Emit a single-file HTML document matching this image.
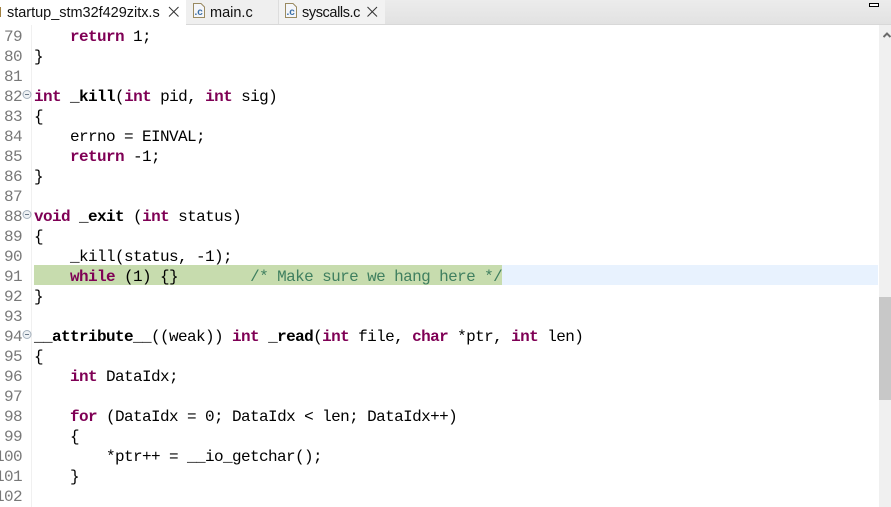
<!DOCTYPE html>
<html><head><meta charset="utf-8">
<style>
html,body{margin:0;padding:0;background:#fff}
#p{position:relative;width:891px;height:507px;overflow:hidden;background:#fff}
.a{position:absolute}
.tabt{position:absolute;top:3px;height:20px;font:14.5px/20px "Liberation Sans",sans-serif;color:#111;white-space:nowrap}
.l{position:absolute;left:34px;height:20px;font:16px/24px "Liberation Mono",monospace;letter-spacing:-.6px;color:#000;white-space:pre}
.n{position:absolute;right:869px;height:20px;font:16px/24px "Liberation Mono",monospace;letter-spacing:-.6px;color:#787878;white-space:pre;text-align:right}
b{font-weight:bold}
.k{color:#7f0055;font-weight:bold}
.c{color:#3f7f5f}
</style></head><body><div id="p">
<div class="a" style="left:0;top:0;width:891px;height:24px;background:linear-gradient(#ececec,#e2e2e2)"></div>
<div class="a" style="left:0;top:24px;width:891px;height:1px;background:#d8d8d8"></div>
<div class="a" style="left:0;top:0;width:186px;height:25px;background:#fff"></div>
<div class="a" style="left:0;top:7px;width:1px;height:10px;background:#a08040"></div>
<div class="a" style="left:186px;top:0;width:92px;height:24px;background:#efefef"></div>
<div class="a" style="left:278px;top:0;width:107px;height:24px;background:#f2f2f2;border-left:1px solid #ddd;box-sizing:border-box"></div>
<div class="tabt" style="left:7px;letter-spacing:-.02px">startup_stm32f429zitx.s</div>
<svg class="a" style="left:168px;top:6px" width="12" height="12"><path d="M1 1L10.5 10.5M10.5 1L1 10.5" stroke="#333" stroke-width="1" fill="none"/></svg>
<svg class="a" style="left:193px;top:3px" width="13" height="16"><path d="M.5.5H8L11.5 4V14.5H.5Z" fill="#f4f6fa" stroke="#9a8a60"/><text x="1.5" y="12" font-family="Liberation Sans,sans-serif" font-size="10" font-weight="bold" fill="#3a6ea5">.c</text></svg>
<div class="tabt" style="left:210px">main.c</div>
<svg class="a" style="left:285px;top:3px" width="13" height="16"><path d="M.5.5H8L11.5 4V14.5H.5Z" fill="#f4f6fa" stroke="#9a8a60"/><text x="1.5" y="12" font-family="Liberation Sans,sans-serif" font-size="10" font-weight="bold" fill="#3a6ea5">.c</text></svg>
<div class="tabt" style="left:302px;letter-spacing:-.4px">syscalls.c</div>
<svg class="a" style="left:367px;top:6px" width="12" height="12"><path d="M.5 1L10 10.5M10 1L.5 10.5" stroke="#333" stroke-width="1" fill="none"/></svg>
<div class="a" style="left:869px;top:3px;border:1px solid #000;background:#fff;width:8px;height:2px"></div>

<div class="a" style="left:31px;top:25px;width:1px;height:482px;background:#f0f0f0"></div>
<div class="a" style="left:34px;top:265px;width:468px;height:20px;background:#c7dcae"></div>
<div class="a" style="left:502px;top:265px;width:376px;height:20px;background:#e8f2fe"></div>

<div class="a" style="left:879px;top:25px;width:12px;height:482px;background:#f0f0f0"></div>
<div class="a" style="left:879px;top:297px;width:12px;height:103px;background:#c8c8c8"></div>
<svg class="a" style="left:883px;top:31px" width="8" height="8"><path d="M.5 6L4 2.5L7.5 6" stroke="#6a6a6a" stroke-width="2" fill="none"/></svg>

<svg class="a" style="left:22px;top:90px" width="10" height="10"><circle cx="5" cy="4.5" r="4" fill="#eef1f4" stroke="#a4b0bc"/><path d="M3 4.5H7" stroke="#6a7a8a"/></svg>
<svg class="a" style="left:22px;top:210px" width="10" height="10"><circle cx="5" cy="4.5" r="4" fill="#eef1f4" stroke="#a4b0bc"/><path d="M3 4.5H7" stroke="#6a7a8a"/></svg>
<svg class="a" style="left:22px;top:330px" width="10" height="10"><circle cx="5" cy="4.5" r="4" fill="#eef1f4" stroke="#a4b0bc"/><path d="M3 4.5H7" stroke="#6a7a8a"/></svg>

<div class="n" style="top:25px">79</div>
<div class="n" style="top:45px">80</div>
<div class="n" style="top:65px">81</div>
<div class="n" style="top:85px">82</div>
<div class="n" style="top:105px">83</div>
<div class="n" style="top:125px">84</div>
<div class="n" style="top:145px">85</div>
<div class="n" style="top:165px">86</div>
<div class="n" style="top:185px">87</div>
<div class="n" style="top:205px">88</div>
<div class="n" style="top:225px">89</div>
<div class="n" style="top:245px">90</div>
<div class="n" style="top:265px">91</div>
<div class="n" style="top:285px">92</div>
<div class="n" style="top:305px">93</div>
<div class="n" style="top:325px">94</div>
<div class="n" style="top:345px">95</div>
<div class="n" style="top:365px">96</div>
<div class="n" style="top:385px">97</div>
<div class="n" style="top:405px">98</div>
<div class="n" style="top:425px">99</div>
<div class="n" style="top:445px">100</div>
<div class="n" style="top:465px">101</div>
<div class="n" style="top:485px">102</div>

<div class="l" style="top:25px">    <span class="k">return</span> 1;</div>
<div class="l" style="top:45px">}</div>
<div class="l" style="top:85px"><span class="k">int</span> <b>_kill</b>(<span class="k">int</span> pid, <span class="k">int</span> sig)</div>
<div class="l" style="top:105px">{</div>
<div class="l" style="top:125px">    errno = EINVAL;</div>
<div class="l" style="top:145px">    <span class="k">return</span> -1;</div>
<div class="l" style="top:165px">}</div>
<div class="l" style="top:205px"><span class="k">void</span> <b>_exit</b> (<span class="k">int</span> status)</div>
<div class="l" style="top:225px">{</div>
<div class="l" style="top:245px">    _kill(status, -1);</div>
<div class="l" style="top:265px">    <span class="k">while</span> (1) {}        <span class="c">/* Make sure we hang here */</span></div>
<div class="l" style="top:285px">}</div>
<div class="l" style="top:325px"><b>__attribute__</b>((weak)) <span class="k">int</span> <b>_read</b>(<span class="k">int</span> file, <span class="k">char</span> *ptr, <span class="k">int</span> len)</div>
<div class="l" style="top:345px">{</div>
<div class="l" style="top:365px">    <span class="k">int</span> DataIdx;</div>
<div class="l" style="top:405px">    <span class="k">for</span> (DataIdx = 0; DataIdx &lt; len; DataIdx++)</div>
<div class="l" style="top:425px">    {</div>
<div class="l" style="top:445px">        *ptr++ = __io_getchar();</div>
<div class="l" style="top:465px">    }</div>
</div></body></html>
